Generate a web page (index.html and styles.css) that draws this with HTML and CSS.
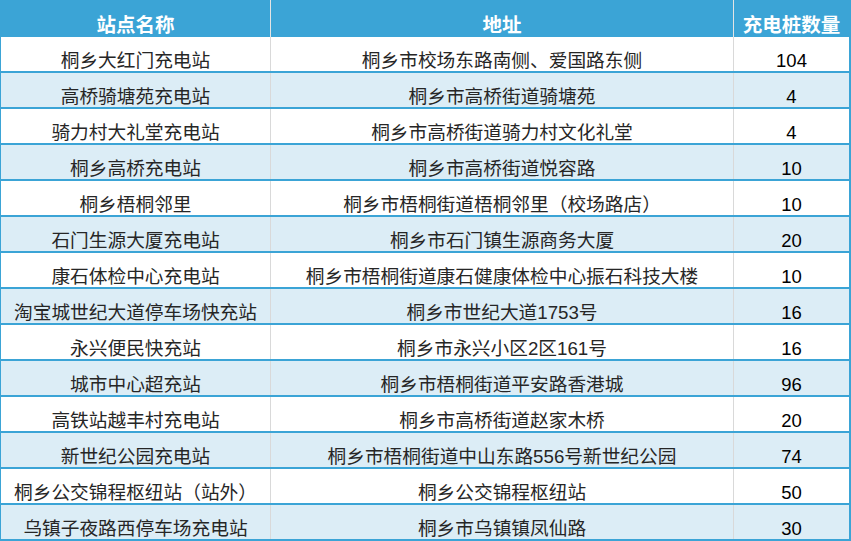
FILE: index.html
```html
<!DOCTYPE html>
<html lang="zh-CN">
<head>
<meta charset="utf-8">
<title>桐乡充电站</title>
<link rel="stylesheet" href="styles.css">
</head>
<body>
<div class="table">
  <div class="row head">
    <div class="cell">站点名称</div>
    <div class="cell">地址</div>
    <div class="cell">充电桩数量</div>
  </div>
  <div class="row"><div class="cell">桐乡大红门充电站</div><div class="cell">桐乡市校场东路南侧、爱国路东侧</div><div class="cell num">104</div></div>
  <div class="row alt"><div class="cell">高桥骑塘苑充电站</div><div class="cell">桐乡市高桥街道骑塘苑</div><div class="cell num">4</div></div>
  <div class="row"><div class="cell">骑力村大礼堂充电站</div><div class="cell">桐乡市高桥街道骑力村文化礼堂</div><div class="cell num">4</div></div>
  <div class="row alt"><div class="cell">桐乡高桥充电站</div><div class="cell">桐乡市高桥街道悦容路</div><div class="cell num">10</div></div>
  <div class="row"><div class="cell">桐乡梧桐邻里</div><div class="cell">桐乡市梧桐街道梧桐邻里（校场路店）</div><div class="cell num">10</div></div>
  <div class="row alt"><div class="cell">石门生源大厦充电站</div><div class="cell">桐乡市石门镇生源商务大厦</div><div class="cell num">20</div></div>
  <div class="row"><div class="cell">康石体检中心充电站</div><div class="cell">桐乡市梧桐街道康石健康体检中心振石科技大楼</div><div class="cell num">10</div></div>
  <div class="row alt"><div class="cell">淘宝城世纪大道停车场快充站</div><div class="cell">桐乡市世纪大道1753号</div><div class="cell num">16</div></div>
  <div class="row"><div class="cell">永兴便民快充站</div><div class="cell">桐乡市永兴小区2区161号</div><div class="cell num">16</div></div>
  <div class="row alt"><div class="cell">城市中心超充站</div><div class="cell">桐乡市梧桐街道平安路香港城</div><div class="cell num">96</div></div>
  <div class="row"><div class="cell">高铁站越丰村充电站</div><div class="cell">桐乡市高桥街道赵家木桥</div><div class="cell num">20</div></div>
  <div class="row alt"><div class="cell">新世纪公园充电站</div><div class="cell">桐乡市梧桐街道中山东路556号新世纪公园</div><div class="cell num">74</div></div>
  <div class="row"><div class="cell">桐乡公交锦程枢纽站（站外）</div><div class="cell">桐乡公交锦程枢纽站</div><div class="cell num">50</div></div>
  <div class="row alt"><div class="cell">乌镇子夜路西停车场充电站</div><div class="cell">桐乡市乌镇镇凤仙路</div><div class="cell num">30</div></div>
</div>
</body>
</html>
```

FILE: styles.css
```css
html, body {
  margin: 0;
  padding: 0;
  background: #ffffff;
}
.table {
  width: 851px;
  box-sizing: border-box;
  border-left: 1px solid #3ba4d6;
  border-right: 2px solid #3ba4d6;
  font-family: "Liberation Sans", "Noto Sans CJK SC", sans-serif;
}
.row {
  display: grid;
  grid-template-columns: 270px 463px 115px;
  height: 36px;
  box-sizing: border-box;
  border-bottom: 2px solid #3ba4d6;
  background: #ffffff;
}
.row.alt {
  background: #dcedf6;
}
.cell {
  display: flex;
  align-items: flex-end;
  justify-content: center;
  box-sizing: border-box;
  border-right: 1px solid #d9d9d9;
  font-size: 18.7px;
  line-height: 20px;
  padding-bottom: 0;
  color: #262626;
  white-space: nowrap;
  overflow: hidden;
}
.cell:last-child {
  border-right: none;
}
.cell.num {
  color: #000000;
  font-size: 18.5px;
}
.row.head {
  height: 37px;
  background: #3ba4d6;
  border-bottom: none;
}
.row.head .cell {
  color: #ffffff;
  font-weight: bold;
  font-size: 19.5px;
  line-height: 22px;
  padding-bottom: 1px;
  border-right-color: #e4e4e4;
}
```
